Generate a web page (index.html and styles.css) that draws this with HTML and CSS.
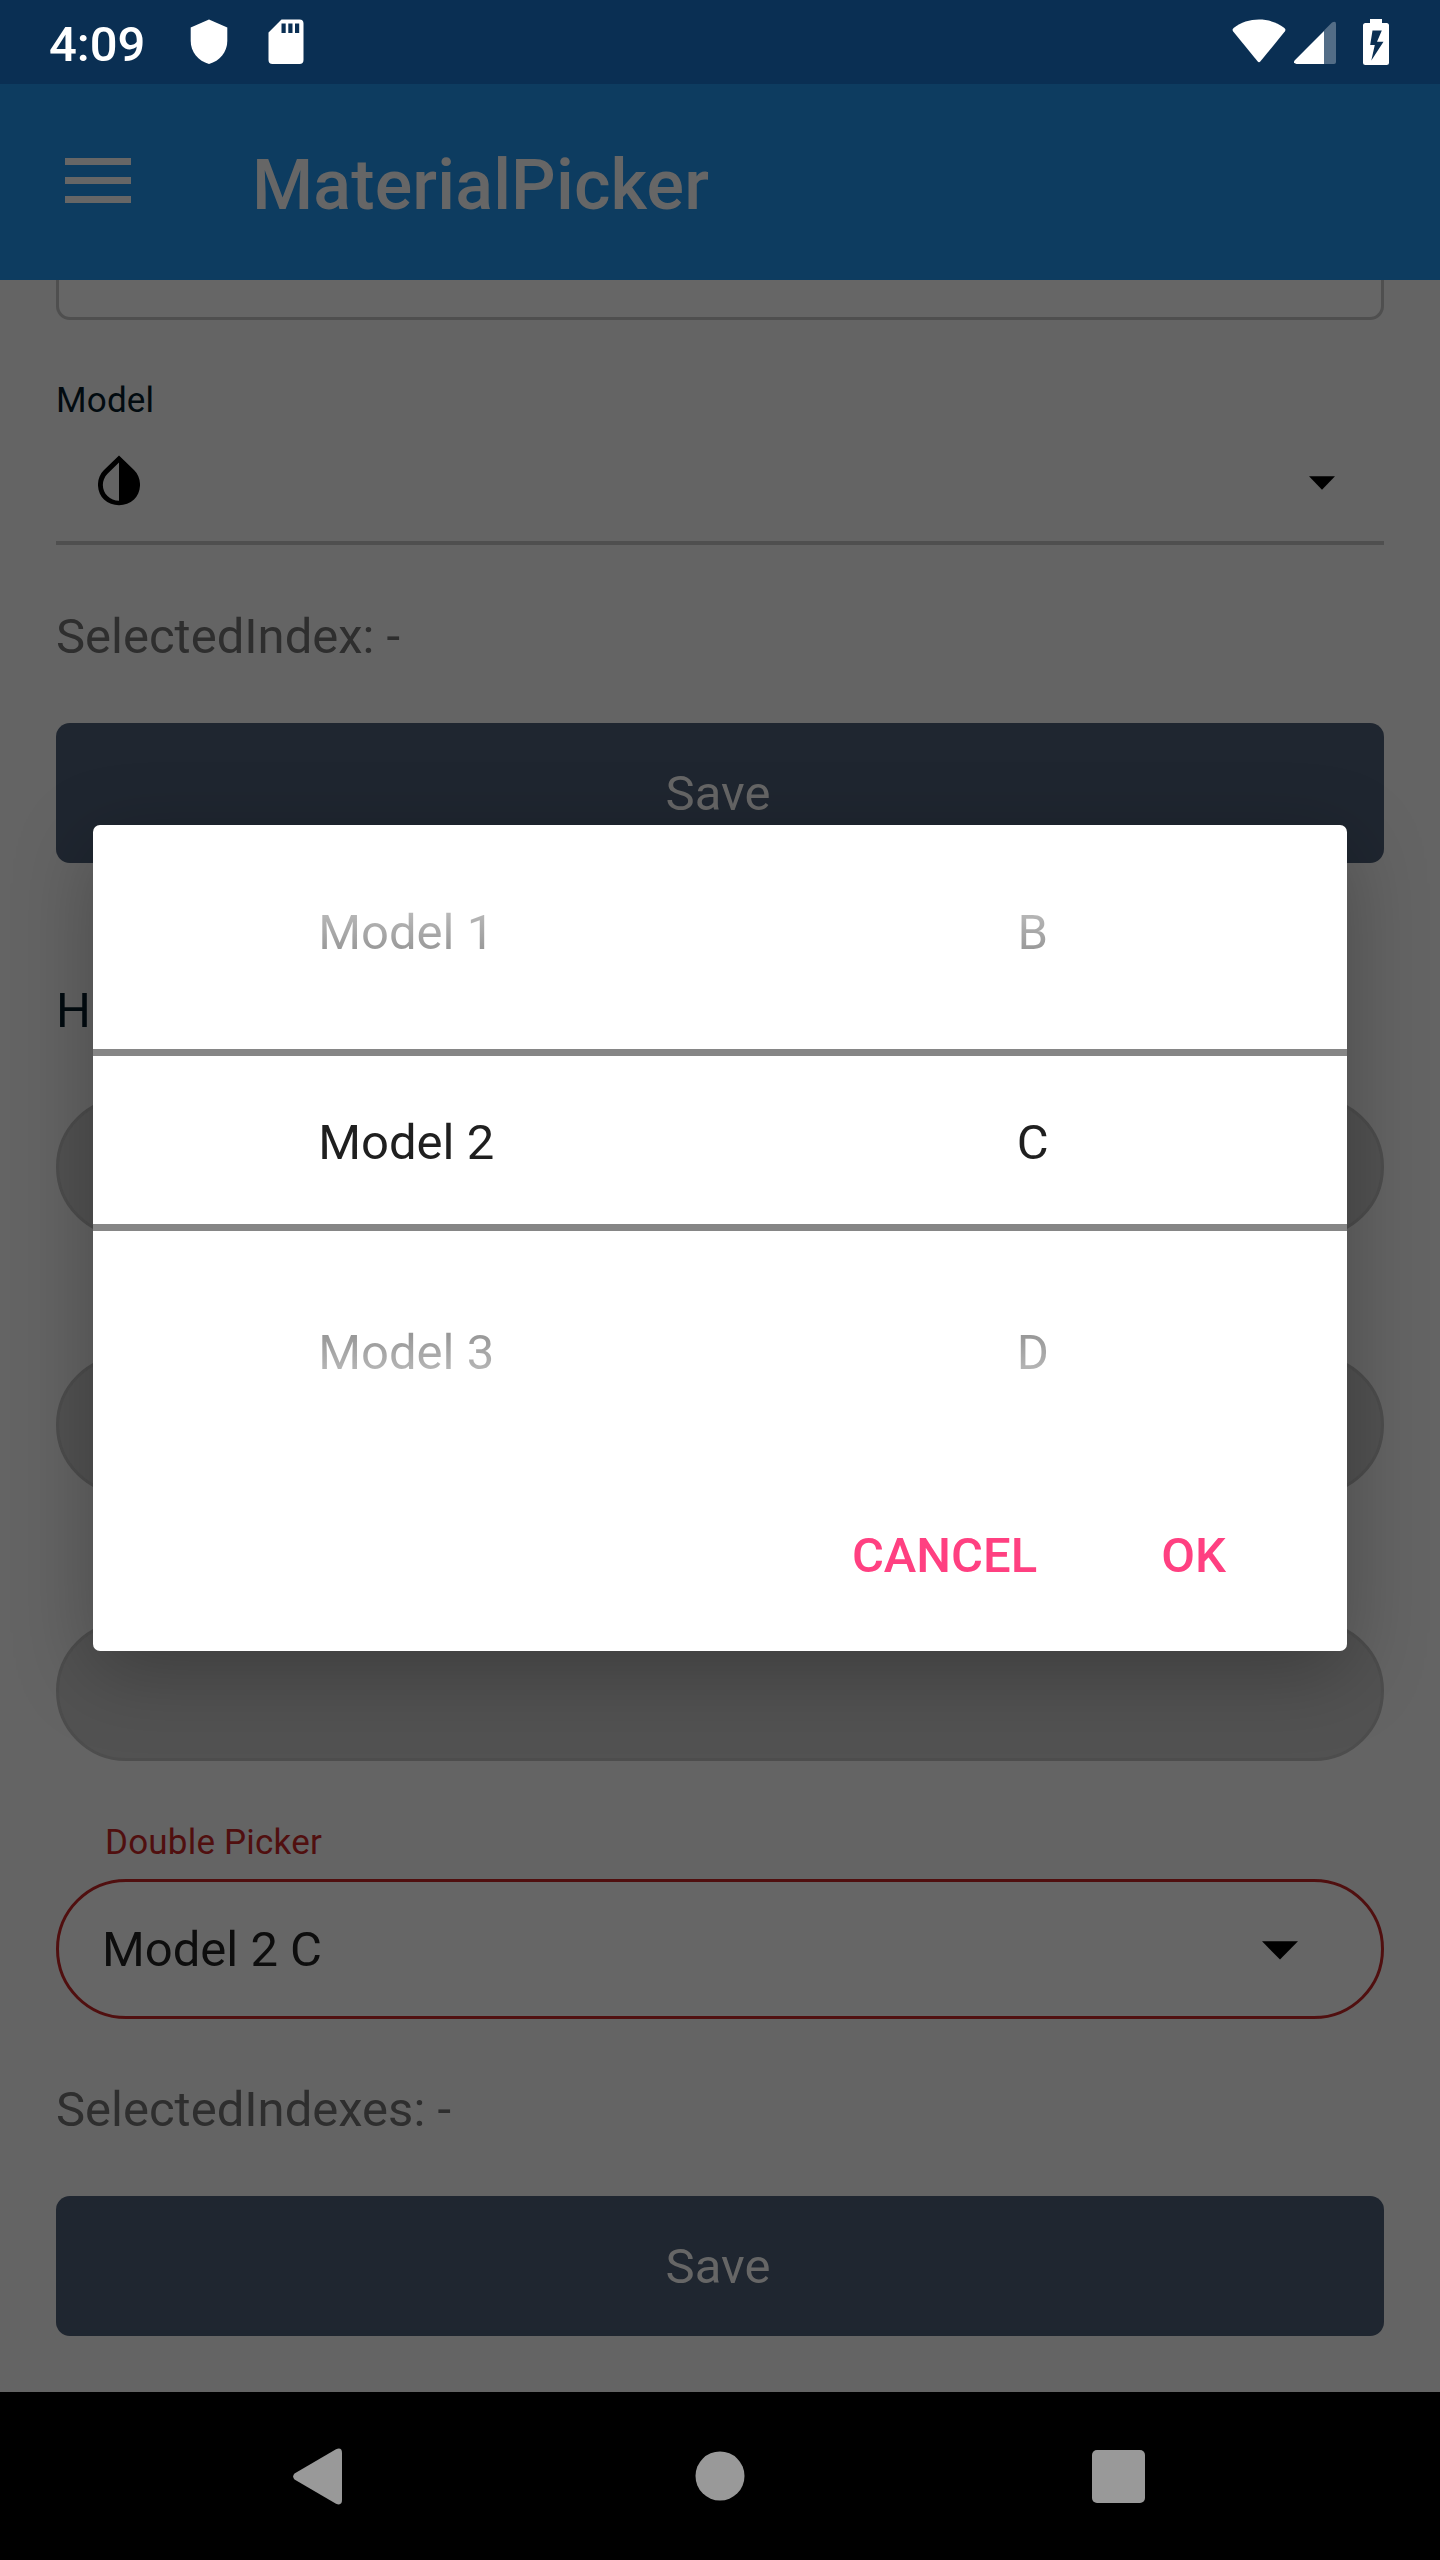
FILE: index.html
```html
<!DOCTYPE html>
<html lang="en">
<head>
<meta charset="utf-8">
<title>MaterialPicker</title>
<link rel="stylesheet" href="styles.css">
</head>
<body>
<div class="screen">
  <header class="status">
    <span class="clock">4:09</span>
    <svg class="shield" width="38" height="46" viewBox="0 0 38 46"><path d="M19 0.500 37.300 8.500V22c0 11-7.500 20-18.300 23C8.200 42 .7 33 .7 22V8.500z"/></svg>
    <svg class="sdcard" width="36" height="46" viewBox="0 0 36 46"><path fill-rule="evenodd" d="M13.500.5H31.500a4 4 0 0 1 4 4V41a4 4 0 0 1-4 4H4.500a4 4 0 0 1-4-4V13.500zM13.500 4.500V14h4.200V4.500zM20.300 4.500V14h4.200V4.500zM27 4.500V14h4.200V4.500z"/></svg>
    <span class="spacer"></span>
    <svg class="wifi" width="54" height="44" viewBox="0 0 54 44"><path d="M1.200 12.600Q-.3 10.500 1.600 9C16-2.200 38-2.200 52.400 9Q54.300 10.500 52.800 12.600L28.500 42.300Q27 44 25.500 42.300z"/></svg>
    <svg class="signal" width="42" height="44" viewBox="0 0 42 44"><path opacity=".3" d="M30 9.500 38 1.500Q42-.6 42 3V41Q42 43 40 43H30z"/><path d="M30 10V43H2.500Q-1.500 42 .8 39.200z"/></svg>
    <svg class="battery" width="26" height="46" viewBox="0 0 26 46"><path fill-rule="evenodd" d="M7 0H19V4H23.500Q26 4 26 6.500V43.500Q26 46 23.500 46H2.500Q0 46 0 43.500V6.500Q0 4 2.500 4H7zM9.500 11.500 7.200 26H11.800L8.300 41.500 20.500 22.700H14L18.800 11.500z"/></svg>
  </header>
  <div class="toolbar">
    <div class="menu"><i></i><i></i><i></i></div>
    <h1 class="title">MaterialPicker</h1>
  </div>
  <main class="content">
    <div class="outlined"></div>
    <div class="label">Model</div>
    <div class="underlined">
      <svg class="drop" width="42" height="51" viewBox="0 0 42 51"><path fill-rule="evenodd" d="M21 .5 36 15C45 24 43 38 36 44.500C28 52 14 52 6 44.500C-1 38-3 24 6 15zM21 7.500 9.500 18.800C3 25.500 3.600 35.500 9.500 41Q14.200 45.600 21 45.800z"/></svg>
      <svg width="26" height="14" viewBox="0 0 26 14"><path d="M0 .3H26L13 13.800z"/></svg>
    </div>
    <div class="index">SelectedIndex: -</div>
    <div class="save">Save</div>
    <div class="heading">H</div>
    <div class="pill"></div>
    <div class="pill"></div>
    <div class="pill last"></div>
    <div class="label error">Double Picker</div>
    <div class="double"><span>Model 2 C</span><svg width="36" height="19" viewBox="0 0 36 19"><path d="M0 .3H36L18 18.500z"/></svg></div>
    <div class="index second">SelectedIndexes: -</div>
    <div class="save">Save</div>
  </main>
  <nav class="nav">
    <svg width="49" height="57" viewBox="0 0 49 57"><path d="M1.500 31.500Q-1.200 28.500 1.500 25.500L43 1.200Q49-1 49 5V52Q49 58 43 55.800z"/></svg>
    <svg class="home" width="50" height="50" viewBox="0 0 50 50"><circle cx="25" cy="25" r="24.500"/></svg>
    <svg width="53" height="53" viewBox="0 0 53 53"><rect width="53" height="53" rx="5"/></svg>
  </nav>
  <section class="dialog">
    <div class="row before"><span>Model 1</span><span>B</span></div>
    <div class="row selected"><span>Model 2</span><span>C</span></div>
    <div class="row after"><span>Model 3</span><span>D</span></div>
    <div class="actions"><span>CANCEL</span><span>OK</span></div>
  </section>
</div>
</body>
</html>
```
FILE: styles.css
```css
* { box-sizing: border-box; }
body { margin: 0; font-family: Roboto, sans-serif; font-size: 49px; line-height: 58px; }
svg { display: block; flex: none; }
.screen { position: relative; width: 1440px; height: 2560px; overflow: hidden; display: flex; flex-direction: column; background: #646464; }

.status { height: 84px; flex: none; display: flex; align-items: flex-start; padding: 19px 51px 0 49px; background: #0a2f53; color: #fff; fill: #fff; }
.clock { font-weight: 500; line-height: 52px; width: 141px; white-space: nowrap; }
.sdcard { margin-left: 40px; }
.spacer { flex: 1; }
.signal { margin: 2px 27px 0 8px; }

.toolbar { height: 196px; flex: none; display: flex; align-items: center; padding: 0 65px; background: #0d3c60; }
.menu { width: 66px; display: flex; flex-direction: column; gap: 12px; margin-bottom: 1px; padding-bottom: 2px; }
.menu i { height: 7px; background: #666; }
.title { margin: 6px 0 0 121px; font-size: 70px; line-height: 82px; font-weight: 500; letter-spacing: .15px; color: #666; }

.content { height: 2112px; flex: none; display: flex; flex-direction: column; padding: 0 56px; }
.outlined { height: 40px; border: 3px solid #4f4f4f; border-top: 0; border-radius: 0 0 14px 14px; background: #666; }
.label { margin-top: 60px; height: 41px; font-size: 35px; line-height: 42px; letter-spacing: .2px; color: #020b10; }
.underlined { height: 124px; display: flex; align-items: center; justify-content: space-between; padding: 0 49px 3px 42px; border-bottom: 4px solid #4f4f4f; }
.drop { margin-top: 2px; }
.underlined svg + svg { margin-top: 6px; }
.index { margin-top: 63px; color: #2e2e2e; }
.save { height: 140px; margin-top: 57px; flex: none; padding-right: 4px; border-radius: 14px; background: #1f2630; color: #666; text-align: center; line-height: 141px; }
.heading { margin-top: 119px; color: #020b10; }
.pill { height: 140px; flex: none; margin-top: 118px; border: 3px solid #4d4d4d; border-radius: 70px; background: #525252; }
.heading + .pill { margin-top: 57px; }
.pill.last { margin-top: 126px; }
.label.error { margin: 61px 0 0 49px; color: #500f0f; }
.double { height: 140px; flex: none; margin-top: 16px; display: flex; align-items: center; justify-content: space-between; padding: 2px 83px 0 43px; border: 3px solid #500f0f; border-radius: 70px; background: #666; color: #0d0d0d; }
.index.second { margin-top: 62px; }

.nav { height: 168px; flex: none; display: flex; align-items: center; justify-content: space-between; padding: 0 295px 0 293px; background: #000; fill: #999; }
.home { margin: 0 0 1px 5px; }

.dialog { position: absolute; left: 93px; top: 825px; width: 1254px; height: 826px; border-radius: 7px; background: #fff; box-shadow: 0 20px 80px rgba(0, 0, 0, .27); display: flex; flex-direction: column; }
.row { display: grid; grid-template-columns: 1fr 1fr; padding-right: 1px; text-align: center; }
.row span { line-height: 58px; background-clip: text; -webkit-background-clip: text; }
.before { height: 224px; padding-top: 79px; color: transparent; }
.before span { height: 58px; background-image: linear-gradient(#bfbfbf, #8f8f8f); }
.selected { height: 182px; padding-top: 58px; border: solid #868686; border-width: 7px 0; color: #1f1f1f; }
.after { height: 204px; padding-top: 93px; color: transparent; }
.after span { height: 58px; background-image: linear-gradient(#8f8f8f, #bfbfbf); }
.actions { display: flex; justify-content: flex-end; gap: 124px; padding: 92px 121px 0 0; color: #ff4081; font-weight: 500; }
```
